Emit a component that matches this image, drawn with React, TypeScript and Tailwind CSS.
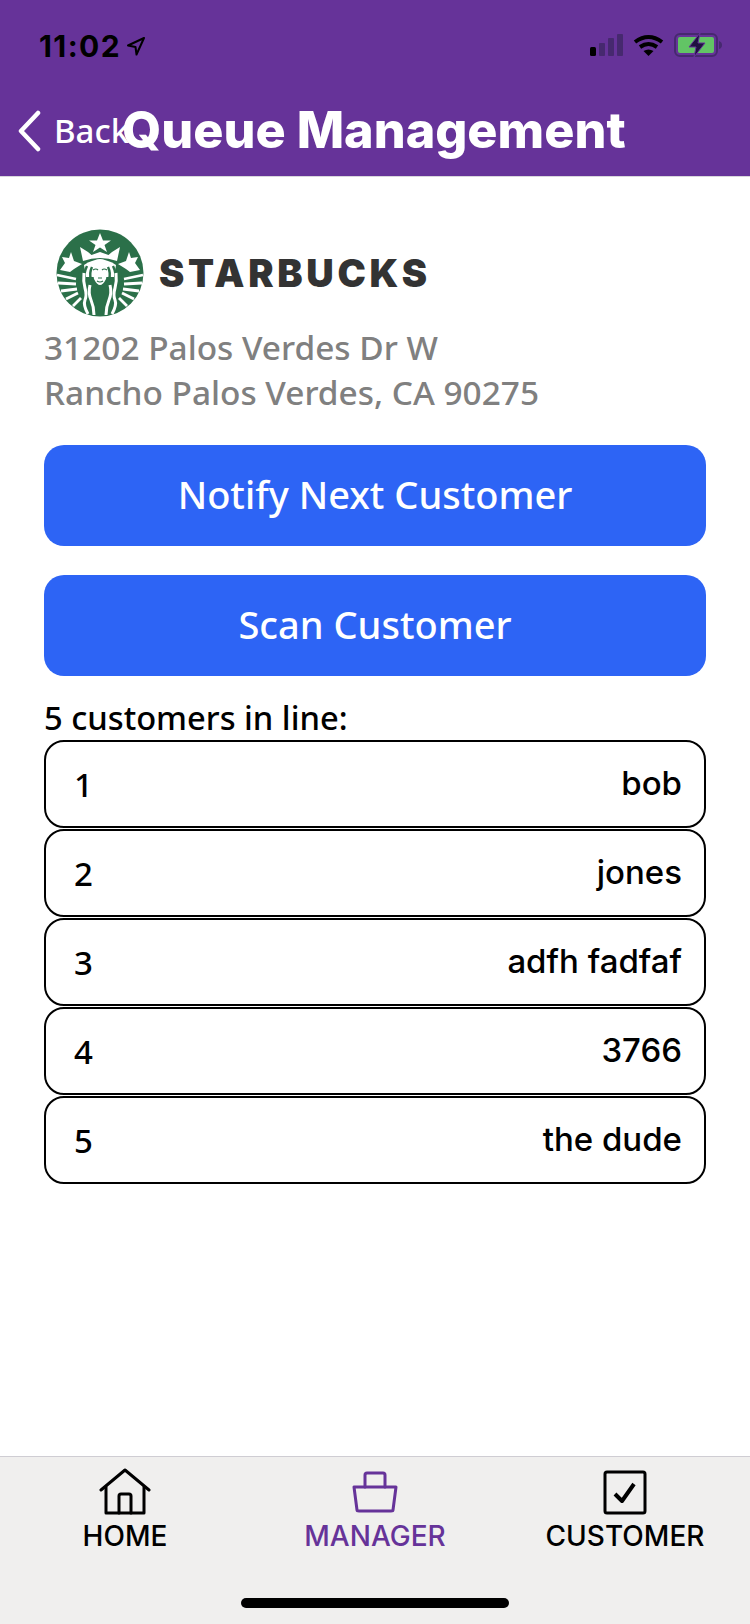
const rows: [string, string][] = [["1", "bob"], ["2", "jones"], ["3", "adfh fadfaf"], ["4", "3766"], ["5", "the dude"]];

function Siren() {
  return (
    <svg width="88" height="88" viewBox="0 0 88 88" className="shrink-0">
      <circle cx="44" cy="44" r="43.500" fill="#2b7049" />
      <path d="M44 4l3 7.500h8l-6.500 4.500 2.500 7-7-4.500-7 4.500 2.500-7-6.500-4.500h8z" fill="#fff" />
      <path d="M24 18l8 5 3.500 3 8.500-3 8.500 3 3.500-3 8-5-3 14q-17-6-34 0z" fill="#fff" />
      <path d="M15 23l3 9 8 3-8 5-4 3-10-2 5-7-3-6 7 1z" fill="#fff" />
      <path d="M73 23l-3 9-8 3 8 5 4 3 10-2-5-7 3-6-7 1z" fill="#fff" />
      <path d="M28 36q16-11 32 0l-2 12H30z" fill="#fff" />
      <path d="M44 30q7 0 8 8l-2 12q-3 6-6 6t-6-6l-2-12q1-8 8-8z" fill="#fff" />
      <g fill="none" stroke="#2b7049" strokeWidth="2.400">
        <path d="M36 38q-3 6-1 13M52 38q3 6 1 13" />
        <path d="M31 37q-4 8-2 16t1 14 2 17" />
        <path d="M57 37q4 8 2 16t-1 14-2 17" />
        <path d="M25 41q-3 8-1 15t0 12 2 14" />
        <path d="M63 41q3 8 1 15t0 12-2 14" />
      </g>
      <path d="M37 41q3-2 5 0M46 41q2-2 5 0M42 49h4M41 52q3 2 6 0" stroke="#2b7049" strokeWidth="1.200" fill="none" />
      <g fill="none" stroke="#fff" strokeWidth="3">
        <path d="M34 56q-2 8 1 15t3 15" />
        <path d="M28 44q-1 8 1 15t0 12 3 14" />
        <path d="M54 56q2 8-1 15t-3 15" />
        <path d="M60 44q1 8-1 15t0 12-3 14" />
      </g>
      <path d="M44 58q-5 6-5 12t3 16h4q3-10 3-16t-5-12z" fill="#2b7049" />
      <g stroke="#fff" strokeWidth="2.800">
        <path d="M1 46l19 4M2 54l18 1M5 62l16-2M10 70l12-6M17 77l8-8" />
        <path d="M87 46l-19 4M86 54l-18 1M83 62l-16-2M78 70l-12-6M71 77l-8-8" />
      </g>
    </svg>
  );
}

export default function App() {
  return (
    <div className="w-[750px] h-[1624px] flex flex-col bg-white overflow-hidden font-['Noto_Sans',sans-serif]">
      <header className="h-[177px] shrink-0 bg-[#663399] border-b border-[#d8d6dc] flex flex-col">
        <div className="h-[91px] flex items-end justify-between pl-[39px] pr-[28px] pb-[34px]">
          <div className="flex items-center gap-[5px] text-black mb-[-4px]">
            <span className="font-['Inter',sans-serif] font-bold text-[30px] leading-none tracking-[1.400px]">11:02</span>
            <svg width="20" height="20" viewBox="0 0 20 20" fill="none" stroke="#000" strokeWidth="2" strokeLinejoin="round">
              <path d="M18 2L2 9.500l7.500 1.500 1 7.500z" />
            </svg>
          </div>
          <div className="flex items-center gap-[10px]">
            <svg width="33" height="22" viewBox="0 0 33 22">
              <rect x="0" y="13" width="6" height="9" rx="1.500" fill="#000" />
              <rect x="9" y="9" width="6" height="13" rx="1" fill="#46296f" />
              <rect x="18" y="4" width="6" height="18" rx="1" fill="#46296f" />
              <rect x="27" y="0" width="6" height="22" rx="1" fill="#46296f" />
            </svg>
            <svg width="31" height="22" viewBox="0 0 31 22" fill="none" stroke="#000" strokeWidth="4">
              <path d="M2 8q13.500-10 27 0" />
              <path d="M7 13q8.500-6 17 0" />
              <path d="M15.500 22l-5-5q5-3 10 0z" fill="#000" strokeWidth="0" />
            </svg>
            <svg width="48" height="24" viewBox="0 0 48 24">
              <rect x="1" y="1" width="42" height="22" rx="5" fill="none" stroke="#46296f" strokeWidth="2" />
              <rect x="4" y="4" width="36" height="16" rx="2" fill="#62c465" />
              <path d="M45 8q3 1 3 4t-3 4z" fill="#46296f" />
              <path d="M26 0l-11 14h7l-2 10 11-14h-7z" fill="#1f1140" stroke="#663399" strokeWidth="1" />
            </svg>
          </div>
        </div>
        <div className="flex-1 flex items-center pb-[6px]">
          <div className="flex items-center pl-[17px] gap-[13px] text-white">
            <svg width="24" height="42" viewBox="0 0 24 42" fill="none" stroke="#fff" strokeWidth="4.500" strokeLinecap="round" strokeLinejoin="round">
              <path d="M21 3L4 21l17 18" />
            </svg>
            <span className="w-[66px] text-[33px] font-medium leading-none whitespace-nowrap">Back</span>
          </div>
          <span className="font-['Inter',sans-serif] font-extrabold text-[50.300px] leading-none text-white whitespace-nowrap ml-[2px]">Queue Management</span>
        </div>
      </header>

      <main className="flex-1 px-[44px] flex flex-col">
        <div className="flex items-center pl-[12px] gap-[15px] mt-[51px] h-[90px]">
          <Siren />
          <span className="font-['Inter',sans-serif] font-black text-[#333333] text-[38px] leading-none tracking-[3.700px]">STARBUCKS</span>
        </div>
        <div className="text-[#808080] text-[33.400px] font-medium leading-[45px] mt-[7px]">
          <div>31202 Palos Verdes Dr W</div>
          <div>Rancho Palos Verdes, CA 90275</div>
        </div>
        <button className="mt-[30px] h-[101px] shrink-0 rounded-[20px] bg-[#2d64f5] text-white text-[38px] font-medium leading-none pb-[4px]">Notify Next Customer</button>
        <button className="mt-[29px] h-[101px] shrink-0 rounded-[20px] bg-[#2d64f5] text-white text-[38px] font-medium leading-none pb-[4px]">Scan Customer</button>
        <div className="text-black text-[32.700px] font-medium leading-[40px] mt-[22px]">5 customers in line:</div>
        <div className="flex flex-col gap-[1px] mt-[2px]">
          {rows.map(([n, name]) => (
            <div key={n} className="h-[88px] border-2 border-black rounded-[20px] flex items-center justify-between pl-[28px] pr-[22px]">
              <span className="text-[33px] font-medium leading-none text-black">{n}</span>
              <span className="font-['Inter',sans-serif] font-medium text-[33px] leading-none text-black mt-[-2px]">{name}</span>
            </div>
          ))}
        </div>
      </main>

      <footer className="h-[168px] shrink-0 bg-[#f0efee] border-t border-[#cfcdd3] relative">
        <div className="grid grid-cols-3 pt-[11px]">
          <div className="flex flex-col items-center">
            <svg width="52" height="48" viewBox="0 0 52 48" fill="none" stroke="#000" strokeWidth="3" strokeLinecap="round" strokeLinejoin="round">
              <path d="M2 22L26 2l24 20" />
              <path d="M7 19v26h38V19" />
              <path d="M20 45V28q0-2 2-2h8q2 0 2 2v17" />
            </svg>
            <span className="font-['Inter',sans-serif] font-medium text-[28px] leading-none mt-[6px] text-black whitespace-nowrap">HOME</span>
          </div>
          <div className="flex flex-col items-center">
            <svg width="46" height="48" viewBox="0 0 46 48" fill="none" stroke="#663399" strokeWidth="3" strokeLinecap="round" strokeLinejoin="round">
              <path d="M2 19h42l-3 23q0 1-2 1H7q-2 0-2-1z" />
              <path d="M13 19V7q0-2 2-2h16q2 0 2 2v12" />
            </svg>
            <span className="font-['Inter',sans-serif] font-medium text-[28px] leading-none mt-[6px] text-[#663399] whitespace-nowrap">MANAGER</span>
          </div>
          <div className="flex flex-col items-center">
            <svg width="44" height="48" viewBox="0 0 44 48" fill="none" stroke="#000" strokeWidth="3" strokeLinejoin="round">
              <rect x="2" y="4" width="40" height="41" rx="2" />
              <path d="M12 26l7 7 12-17" strokeWidth="4" />
            </svg>
            <span className="font-['Inter',sans-serif] font-medium text-[28px] leading-none mt-[6px] text-black whitespace-nowrap">CUSTOMER</span>
          </div>
        </div>
        <div className="absolute left-[241px] top-[141px] w-[268px] h-[10px] rounded-full bg-black" />
      </footer>
    </div>
  );
}
